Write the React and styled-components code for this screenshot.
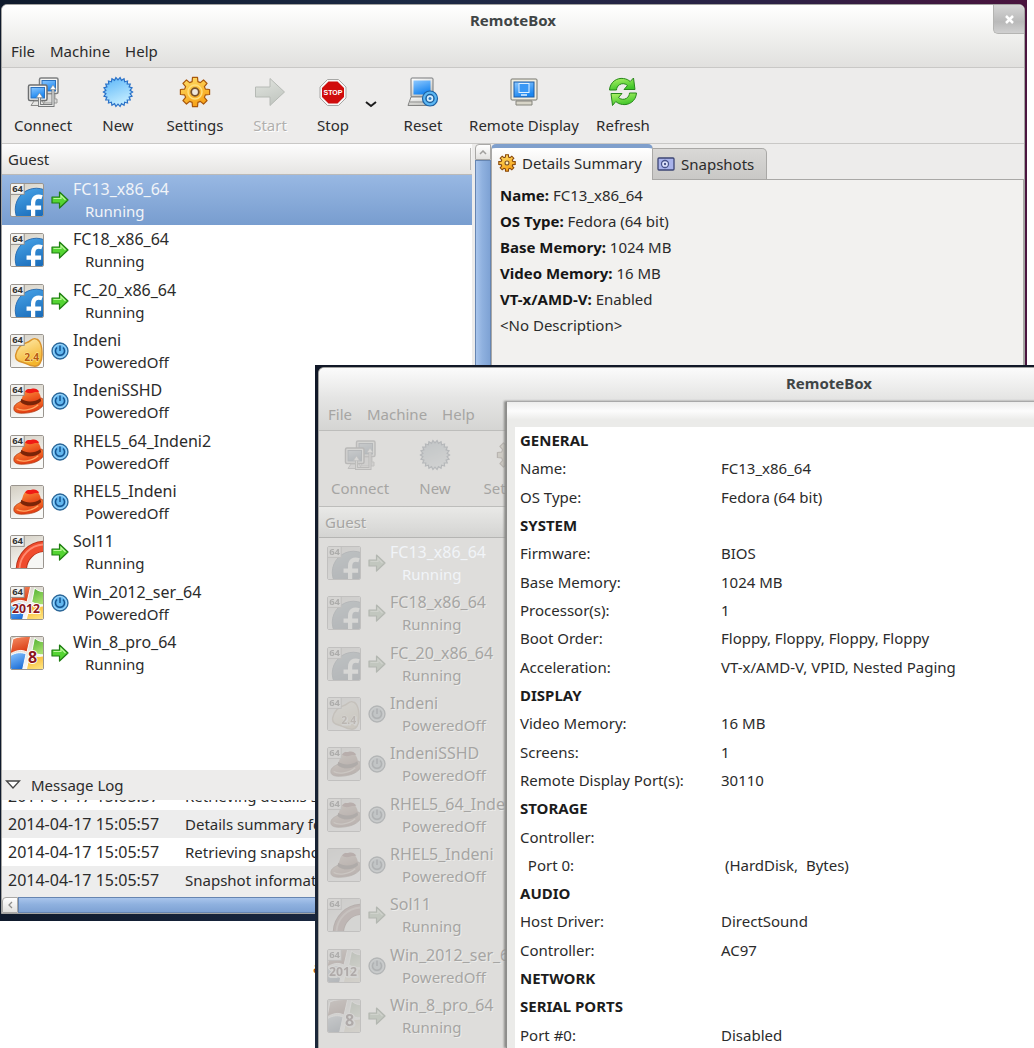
import React from "react";
import styled, { createGlobalStyle, css } from "styled-components";

const GlobalStyle = createGlobalStyle`
  * {
    box-sizing: border-box;
  }
  body {
    margin: 0;
    background: #fff;
    color: #2b2b2b;
    font-family: "Noto Sans", "Open Sans", sans-serif;
    font-size: 15px;
    line-height: 22px;
  }
  button {
    font: inherit;
    color: inherit;
    border: 0;
    padding: 0;
    background: none;
  }
`;

const Desktop = styled.div`
  position: relative;
  height: 100vh;
  min-height: 921px;
  overflow: hidden;
`;

const Screen = styled.div`
  position: absolute;
  width: calc(100% - 7px);
  ${(p) =>
    p.$front
      ? css`
          top: 365px;
          left: 315px;
          bottom: 0;
          padding: 2px 2px 0 3px;
          background: linear-gradient(#111827, #1b2739);
        `
      : css`
          top: 0;
          left: 0;
          padding: 4px 2px 7px 1px;
          background: linear-gradient(90deg, #0f1a2c, #1c2a45 40%, #2c2246 75%, #4a143e);
        `}
`;

const Stray = styled.span`
  position: absolute;
  top: 956px;
  left: 313px;
  color: #a04a00;
`;

const Window = styled.section`
  position: relative;
  border: 1px solid #a3a3a1;
  border-radius: 6px 6px 0 0;
  overflow: hidden;
  background: ${(p) => (p.$dim ? "#dedddb" : "#edeceb")};
  color: ${(p) => (p.$dim ? "#a6a5a3" : "#2b2b2b")};
  text-shadow: ${(p) => (p.$dim ? "1px 1px 0 #ececea" : "none")};
  ${(p) => p.$dim && "height: 100%; border-bottom: 0;"}
`;

const Top = styled.header`
  background: ${(p) =>
    p.$dim
      ? "linear-gradient(#fbfbfb, #e4e4e3 50%, #d5d5d3)"
      : "linear-gradient(#fff, #eeeeec 55%, #e1e0de)"};
  border-bottom: 1px solid ${(p) => (p.$dim ? "#bdbdbb" : "#c9c8c6")};
`;

const Title = styled.h1`
  margin: 0;
  font-size: 15px;
  line-height: 30px;
  font-weight: bold;
  text-align: center;
  color: #3f4546;
  text-shadow: none;
`;

const MenuBar = styled.nav`
  display: flex;
  gap: 15px;
  padding: 2px 9px;
  line-height: 28px;
`;

const CloseButton = styled.button`
  position: absolute;
  top: 0;
  right: 0;
  width: 31px;
  height: 29px;
  display: flex;
  align-items: center;
  justify-content: center;
  border: 1px solid #b4b4b2;
  border-width: 0 0 1px 1px;
  border-radius: 0 0 0 5px;
  background: linear-gradient(#d6d6d6, #b9b9b9 60%, #d0d0d0);
`;

const Toolbar = styled.div`
  display: flex;
  height: 76px;
  padding-top: 8px;
  border-bottom: 1px solid ${(p) => (p.$dim ? "#bdbdbb" : "#c9c8c6")};
`;

const ToolButton = styled.button`
  flex: none;
  width: ${(p) => p.$width}px;
  display: flex;
  flex-direction: column;
  align-items: center;
  gap: 6px;
  line-height: 22px;
  white-space: nowrap;
  &:disabled {
    color: #b1b0ae;
    text-shadow: 1px 1px 0 #fff;
  }
`;

const Chevron = styled.button`
  width: 14px;
  padding-top: 18px;
  display: flex;
  justify-content: center;
`;

const Glyph = styled.svg`
  display: block;
  flex: none;
  overflow: ${(p) => (p.$clip ? "hidden" : "visible")};
  ${(p) => p.$clip && "border: 1px solid #9a958f; border-radius: 2px;"}
  ${(p) => p.$dim && "filter: grayscale(0.8) contrast(0.6); opacity: 0.35;"}
`;

const Body = styled.div`
  display: flex;
  height: ${(p) => (p.$dim ? "auto" : "626px")};
`;

const GuestPane = styled.div`
  width: 470px;
  background: ${(p) => (p.$dim ? "transparent" : "#fff")};
`;

const ColumnHeader = styled.div`
  display: flex;
  align-items: center;
  height: 31px;
  padding: 0 1px 0 6px;
  background: ${(p) =>
    p.$dim
      ? "linear-gradient(#e9e9e7, #d4d4d2)"
      : "linear-gradient(#fdfdfd, #e6e5e3)"};
  border-bottom: 1px solid ${(p) => (p.$dim ? "#b5b5b3" : "#bbbab8")};
`;

const HeaderCell = styled.span`
  flex: 1;
  border-right: 1px solid #bbbab8;
`;

const GuestList = styled.ul`
  margin: 0;
  padding: 0;
  list-style: none;
  display: grid;
  grid-auto-rows: 1fr;
  height: 503px;
`;

const Guest = styled.li`
  display: flex;
  align-items: center;
  padding-left: 8px;
  background: ${(p) =>
    p.$selected && !p.$dim ? "linear-gradient(#98b8e3, #789dcf)" : "none"};
  color: ${(p) => (p.$selected ? "#f1f4f8" : "inherit")};
  ${(p) => p.$selected && "text-shadow: none;"}
`;

const State = styled.span`
  padding: 0 4px 0 7px;
`;

const GuestText = styled.div`
  display: flex;
  flex-direction: column;
  white-space: nowrap;
`;

const GuestName = styled.span`
  font-size: 16px;
`;

const Status = styled.span`
  padding-left: 12px;
`;

const Scrollbar = styled.div`
  display: flex;
  flex-direction: ${(p) => (p.$vertical ? "column" : "row")};
  ${(p) => (p.$vertical ? "width: 16px; margin-left: 3px;" : "height: 16px;")}
`;

const ScrollButton = styled.button`
  flex: none;
  width: 16px;
  height: 16px;
  display: flex;
  align-items: center;
  justify-content: center;
  border: 1px solid #a9a8a6;
  border-radius: 4px 0 0 0;
  background: linear-gradient(#fff, #e2e1df);
`;

const Thumb = styled.div`
  flex: 1;
  border: 1px solid #6685b1;
  background: linear-gradient(
    ${(p) => (p.$vertical ? "90deg" : "180deg")},
    #a9c5ec,
    #8fb1df 45%,
    #7ea2d4
  );
`;

const Notebook = styled.div`
  flex: 1;
  min-width: 0;
  display: flex;
  flex-direction: column;
`;

const Tabs = styled.div`
  display: flex;
  align-items: flex-end;
  height: 36px;
`;

const Tab = styled.button`
  display: flex;
  align-items: center;
  gap: 6px;
  white-space: nowrap;
  border: 1px solid #a9a8a6;
  ${(p) =>
    p.$active
      ? css`
          width: 162px;
          height: 36px;
          padding: 0 6px 2px;
          border-top: 4px solid #7f9fcc;
          border-bottom: 0;
          border-radius: 5px 5px 0 0;
          background: linear-gradient(#fff, #f2f1ef 60%);
        `
      : css`
          width: 114px;
          height: 32px;
          padding: 0 4px;
          border-left: 0;
          border-radius: 0 5px 0 0;
          background: linear-gradient(#d9d8d6, #c9c8c6);
        `}
`;

const TabRule = styled.span`
  flex: 1;
  height: 1px;
  background: #a9a8a6;
`;

const TabPage = styled.div`
  flex: 1;
  padding: 2px 8px;
  border: 1px solid #a9a8a6;
  border-top: 0;
  background: #f2f1ef;
  line-height: 26px;
`;

const Fact = styled.div`
  b {
    color: #161616;
  }
`;

const Expander = styled.button`
  display: flex;
  align-items: center;
  gap: 10px;
  width: 100%;
  height: 30px;
  padding: 0 3px;
`;

const LogView = styled.div`
  display: flex;
  flex-direction: column;
  justify-content: flex-end;
  height: 97px;
  overflow: hidden;
  background: #ededed;
  padding-bottom: 3px;
`;

const LogTable = styled.table`
  border-collapse: collapse;
  td {
    height: 28px;
    padding: 0 0 0 6px;
    white-space: nowrap;
  }
  td:first-child {
    width: 177px;
    font-size: 16px;
  }
  tr:nth-child(odd) {
    background: #fff;
  }
  tr:nth-child(even) {
    background: #ededed;
  }
`;

const Sheet = styled.div`
  position: absolute;
  top: 33px;
  left: 187px;
  right: 0;
  bottom: 0;
  padding: 25px 0 0 8px;
  border-top: 1px solid #a8a8a8;
  border-left: 1px solid #8d8d8b;
  box-shadow: -2px 0 2px #8b8b89;
  background: linear-gradient(#ededec, #fcfcfc 9px, #ebebe9 18px);
  color: #2b2b2b;
  text-shadow: none;
`;

const SheetTable = styled.table`
  width: 100%;
  height: 623px;
  border-collapse: collapse;
  background: #fff;
  th,
  td {
    padding: 0 0 2px 5px;
    text-align: left;
    font-weight: normal;
    white-space: pre;
  }
  th {
    width: 201px;
  }
  th[colspan] {
    font-weight: bold;
    color: #1c1c1c;
  }
`;

const guests = [
  ["FC13_x86_64", "Running", "fedora", true],
  ["FC18_x86_64", "Running", "fedora", true],
  ["FC_20_x86_64", "Running", "fedora", true],
  ["Indeni", "PoweredOff", "linux", true],
  ["IndeniSSHD", "PoweredOff", "redhat", true],
  ["RHEL5_64_Indeni2", "PoweredOff", "redhat", true],
  ["RHEL5_Indeni", "PoweredOff", "redhat", false],
  ["Sol11", "Running", "solaris", true],
  ["Win_2012_ser_64", "PoweredOff", "win2012", true],
  ["Win_8_pro_64", "Running", "win8", false],
];

const facts = [
  ["Name:", "FC13_x86_64"],
  ["OS Type:", "Fedora (64 bit)"],
  ["Base Memory:", "1024 MB"],
  ["Video Memory:", "16 MB"],
  ["VT-x/AMD-V:", "Enabled"],
];

const logRows = [
  "Retrieving details s",
  "Details summary for",
  "Retrieving snapshots",
  "Snapshot information",
];

const details = [
  ["GENERAL"],
  ["Name:", "FC13_x86_64"],
  ["OS Type:", "Fedora (64 bit)"],
  ["SYSTEM"],
  ["Firmware:", "BIOS"],
  ["Base Memory:", "1024 MB"],
  ["Processor(s):", "1"],
  ["Boot Order:", "Floppy, Floppy, Floppy, Floppy"],
  ["Acceleration:", "VT-x/AMD-V, VPID, Nested Paging"],
  ["DISPLAY"],
  ["Video Memory:", "16 MB"],
  ["Screens:", "1"],
  ["Remote Display Port(s):", "30110"],
  ["STORAGE"],
  ["Controller:", ""],
  ["  Port 0:", " (HardDisk,  Bytes)"],
  ["AUDIO"],
  ["Host Driver:", "DirectSound"],
  ["Controller:", "AC97"],
  ["NETWORK"],
  ["SERIAL PORTS"],
  ["Port #0:", "Disabled"],
];

function ring(steps, center) {
  return steps
    .map(([angle, r]) => {
      const x = center + r * Math.cos(angle);
      const y = center + r * Math.sin(angle);
      return `${x.toFixed(2)},${y.toFixed(2)}`;
    })
    .join(" ");
}

const burst = ring(
  Array.from({ length: 44 }, (_, i) => [(i * Math.PI) / 22, i % 2 ? 12.2 : 14.6]),
  16
);

const cog = ring(
  Array.from({ length: 8 }, (_, i) => {
    const a = (i * Math.PI) / 4;
    return [
      [a - 0.27, 10.8],
      [a - 0.17, 14.8],
      [a + 0.17, 14.8],
      [a + 0.27, 10.8],
    ];
  }).flat(),
  16
);

function Defs() {
  const gradients = {
    screen: ["#8cc8ff", "#1a86f0"],
    burst: ["#58b4f8", "#c2ecff"],
    gold: ["#ffe06a", "#f7a41a"],
    green: ["#b4f56c", "#3fc528"],
    grey: ["#e2e5e0", "#c3c8c2"],
    metal: ["#ffffff", "#c4c4c0"],
    plate: ["#d3cec2", "#fafaf8"],
    fedora: ["#4ba6ea", "#0b5bab"],
    hat: ["#ff9440", "#e23a10"],
    flame: ["#ffeeb4", "#f4b52c"],
    winRed: ["#f7936a", "#d93a12"],
    winGreen: ["#4cae2c", "#a5de6c"],
    winBlue: ["#8cc6ff", "#1e6fd8"],
    winGold: ["#f5a516", "#ffe27a"],
  };
  return (
    <svg width="0" height="0" style={{ position: "absolute" }} aria-hidden="true">
      <defs>
        {Object.entries(gradients).map(([id, [from, to]]) => (
          <linearGradient key={id} id={id} x1="0" y1="0" x2="0.4" y2="1">
            <stop offset="0" stopColor={from} />
            <stop offset="1" stopColor={to} />
          </linearGradient>
        ))}
      </defs>
    </svg>
  );
}

const toolArt = {
  connect: (
    <>
      <rect x="12.500" y="2" width="18.500" height="15.500" rx="1.500" fill="#f6f6f4" stroke="#7d7f80" strokeWidth="1.500" />
      <rect x="15" y="4.500" width="13.500" height="10.500" fill="url(#screen)" stroke="#2b71bd" />
      <path d="M18 18h10v5h2v4H17z" fill="#dcdcda" stroke="#9b9b99" />
      <rect x="1.500" y="9" width="18.500" height="15.500" rx="1.500" fill="#f6f6f4" stroke="#6d6f70" strokeWidth="1.500" />
      <rect x="4" y="11.500" width="13.500" height="10.500" fill="url(#screen)" stroke="#2b71bd" />
      <path d="M7 25h8l3 4.500H4z" fill="#e6e6e4" stroke="#8b8b89" />
      <path
        d="M12.500 20v9.500H26V13"
        fill="none"
        stroke="#77797a"
        strokeWidth="3"
      />
      <path
        d="M12.500 20v9.500H26V13"
        fill="none"
        stroke="#e9e9e7"
        strokeWidth="1.200"
      />
      <path d="M9.500 21.500l3-4.500 3 4.500zM23 13.500l3-4.500 3 4.500z" fill="#fff" stroke="#8b8d8e" strokeWidth="0.600" />
    </>
  ),
  new: <polygon points={burst} fill="url(#burst)" stroke="#2b72c8" strokeWidth="1.200" />,
  settings: (
    <>
      <polygon
        points={cog}
        fill="url(#gold)"
        stroke="#a9580c"
        strokeWidth="1.200"
        strokeLinejoin="round"
      />
      <circle cx="16" cy="16" r="7" fill="none" stroke="#ffdf7c" strokeWidth="1.500" />
      <circle cx="16" cy="16" r="3.800" fill="#eee7dc" stroke="#77502a" strokeWidth="1.800" />
    </>
  ),
  start: (
    <path
      d="M1.500 11H16V2.500L30.500 16 16 29.500V21H1.500z"
      fill="url(#grey)"
      stroke="#b6bab5"
      strokeLinejoin="round"
    />
  ),
  stop: (
    <>
      <path
        d="M10.500 3.500h11l7.500 7.500v11l-7.500 7.500h-11L3 22V11z"
        fill="#f7f7f7"
        stroke="#a7a7a5"
      />
      <path d="M11.500 5.500h9l6.500 6.500v9l-6.500 6.500h-9L5 21v-9z" fill="#d00c0c" />
      <text
        x="16"
        y="19"
        textAnchor="middle"
        fontFamily="Liberation Sans, sans-serif"
        fontSize="7"
        fontWeight="bold"
        fill="#fff"
      >
        STOP
      </text>
    </>
  ),
  reset: (
    <>
      <rect x="4" y="2" width="22" height="19" rx="1" fill="url(#metal)" stroke="#77797a" />
      <rect x="6.500" y="4.500" width="17" height="14" fill="url(#screen)" />
      <path d="M4 21h20l3 8.500H1z" fill="url(#metal)" stroke="#838382" />
      <path d="M3 26h20" stroke="#8d8d8b" />
      <circle cx="23" cy="22.500" r="7.500" fill="#5cb7f2" stroke="#1e62a5" strokeWidth="1.200" />
      <circle cx="23" cy="22.500" r="4" fill="#d8f0ff" stroke="#1c5f9e" strokeWidth="1.500" />
      <circle cx="23" cy="22.500" r="1.500" fill="#2d7cc4" />
    </>
  ),
  display: (
    <>
      <path d="M8 25h16v4H8z" fill="#d8d5c8" stroke="#85847c" />
      <rect x="3" y="3" width="26" height="21" rx="1" fill="#f1eee1" stroke="#77776f" />
      <rect x="6" y="6" width="20" height="15" fill="url(#screen)" stroke="#1c5da8" />
      <rect x="11" y="7.500" width="10" height="9" fill="#3a98f5" stroke="#dff0ff" />
      <path d="M13 19h6" stroke="#dff0ff" strokeWidth="1.500" />
    </>
  ),
  refresh: (
    <g fill="url(#green)" stroke="#28871b" strokeLinejoin="round">
      <path d="M2.500 14C3 6 10 1.500 16.500 2.500c3 .4 5 1.500 6.700 3L26.500 2l1.500 11.500H17l3.500-4c-2-2-5.500-2.500-8-.8C10.500 10 9.600 12 9.500 14z" />
      <path d="M29.500 17c-.5 8-7.500 12.500-14 11.500-3-.4-5-1.500-6.700-3L5.500 29.500 4 17.500h11l-3.500 4c2 2 5.500 2.500 8 .8 2-1.300 2.900-3.300 3-5.300z" />
    </g>
  ),
};

function WinFlag({ label }) {
  const big = label === "8";
  return (
    <>
      <path d="M2 2C8-1 15 0 21-1l-4 17C11 13 6 14-1 18z" fill="url(#winRed)" stroke="#fff" />
      <path d="M25 1c3 3 7 4 10 4v14c-5 0-9-1-13-3z" fill="url(#winGreen)" stroke="#fff" />
      <path d="M-1 20c6-4 12-4 17-2l-4 18H-1z" fill="url(#winBlue)" stroke="#fff" />
      <path d="M20 18c5 3 9 3 15 2v16H16z" fill="url(#winGold)" stroke="#fff" />
      <text
        x={big ? 23 : 16}
        y="28"
        textAnchor="middle"
        fontFamily="Noto Sans, sans-serif"
        fontSize={big ? 17 : 13}
        fontWeight="bold"
        fill="#8c1620"
        stroke="#fff"
        strokeWidth="2"
        paintOrder="stroke"
      >
        {label}
      </text>
    </>
  );
}

const osArt = {
  fedora: (
    <>
      <circle cx="27" cy="27" r="22.500" fill="url(#fedora)" stroke="#2a6cb0" />
      <path
        d="M33 14c-6-2-9.500 1-9.500 6V36M16.500 25H32"
        fill="none"
        stroke="#fff"
        strokeWidth="4.500"
      />
    </>
  ),
  linux: (
    <>
      <path
        d="M17 8c4-1 5-5 9-4 5 1 7 9 7 17 0 7-3 13-9 12-5 0-7-3-12-4-4-1-8-3-7-8C6 17 9 10 17 8z"
        fill="url(#flame)"
        stroke="#d9932c"
        strokeWidth="1.500"
      />
      <text
        x="22"
        y="28"
        textAnchor="middle"
        fontFamily="Noto Sans, sans-serif"
        fontSize="11"
        fontWeight="bold"
        fill="#b85a12"
        stroke="#fff0a0"
        strokeWidth="1"
        paintOrder="stroke"
      >
        2.4
      </text>
    </>
  ),
  redhat: (
    <>
      <path
        d="M3 25c0-4 4-6 8-8 7-4 14-3 22-3 3 3 2 8-1 10-4 4-12 6-20 6-5 0-9-1-9-5z"
        fill="url(#hat)"
        stroke="#b03a10"
        strokeWidth="0.800"
      />
      <path
        d="M11 16c2-5 2-10 7-11 4-1 8-1 10 1 3 3 4 7 4 11-6 6-16 6-21 2z"
        fill="url(#hat)"
      />
      <path d="M11 14.500c5 4 14 4 20-.5l1 3c-6 6-16 6-22 1z" fill="#7a2408" />
      <path d="M15 7c2-4 5-2 7-3 3-1 6 0 8 3-2 1-4 0-6 1-3 1-7 1-9-1z" fill="#f01a14" />
      <path d="M6 25c5 3 16 2 23-4" fill="none" stroke="#ffa866" strokeWidth="1.300" />
    </>
  ),
  solaris: (
    <>
      <circle cx="36" cy="36" r="25" fill="#f6f6f4" stroke="#b8331a" strokeWidth="12" />
      <circle cx="36" cy="36" r="25" fill="none" stroke="#f04c2e" strokeWidth="10" />
      <circle cx="36" cy="36" r="27" fill="none" stroke="#ff8a70" strokeWidth="2" />
    </>
  ),
  win2012: <WinFlag label="2012" />,
  win8: <WinFlag label="8" />,
};

function OsIcon({ os, is64, dim }) {
  return (
    <Glyph $clip $dim={dim} width="34" height="34" viewBox="0 0 34 34" aria-hidden="true">
      <rect width="34" height="34" fill="url(#plate)" />
      {osArt[os]}
      {is64 && (
        <>
          <rect x="-1" y="-1" width="15" height="12" fill="#f3f3f1" stroke="#8c8884" />
          <text
            x="7"
            y="9"
            textAnchor="middle"
            fontFamily="Noto Sans, sans-serif"
            fontSize="10"
            fontWeight="bold"
            fill="#333"
          >
            64
          </text>
        </>
      )}
    </Glyph>
  );
}

function StateIcon({ running, dim }) {
  return (
    <Glyph $dim={dim} width="18" height="18" viewBox="0 0 18 18" aria-hidden="true">
      {running ? (
        <>
          <path
            d="M1 6h7.500V1L17 9l-8.500 8v-5H1z"
            fill="#54d433"
            stroke="#1f7d12"
            strokeWidth="1.200"
            strokeLinejoin="round"
          />
          <path d="M2.500 7.500H10V4.500L14.500 9" fill="none" stroke="#b9f79a" strokeWidth="1.200" />
        </>
      ) : (
        <>
          <circle cx="9" cy="9" r="8" fill="#62b7ef" stroke="#2c6697" strokeWidth="1.300" />
          <path
            d="M6 5.500a4.500 4.500 0 1 0 6 0M9 3.500V9"
            fill="none"
            stroke="#14538f"
            strokeWidth="1.500"
          />
          <circle cx="9" cy="9" r="6.500" fill="none" stroke="#b6e1fb" strokeWidth="0.800" />
        </>
      )}
    </Glyph>
  );
}

function Tool({ art, label, width, dim, disabled }) {
  return (
    <ToolButton $width={width} disabled={disabled}>
      <Glyph $dim={dim} width="32" height="32" viewBox="0 0 32 32" aria-hidden="true">
        {toolArt[art]}
      </Glyph>
      {label}
    </ToolButton>
  );
}

function TitleAndMenu({ dim }) {
  return (
    <Top $dim={dim}>
      <Title>RemoteBox</Title>
      <MenuBar>
        <button>File</button>
        <button>Machine</button>
        <button>Help</button>
      </MenuBar>
    </Top>
  );
}

function Guests({ dim }) {
  return (
    <GuestPane $dim={dim}>
      <ColumnHeader $dim={dim}>
        <HeaderCell>Guest</HeaderCell>
      </ColumnHeader>
      <GuestList>
        {guests.map(([name, status, os, is64], index) => (
          <Guest key={name} $selected={index === 0} $dim={dim}>
            <OsIcon os={os} is64={is64} dim={dim} />
            <State>
              <StateIcon running={status === "Running"} dim={dim} />
            </State>
            <GuestText>
              <GuestName>{name}</GuestName>
              <Status>{status}</Status>
            </GuestText>
          </Guest>
        ))}
      </GuestList>
    </GuestPane>
  );
}

function MainWindow() {
  return (
    <Window>
      <TitleAndMenu />
      <CloseButton aria-label="Close">
        <svg width="9" height="9" viewBox="0 0 9 9">
          <path d="M1 1l7 7M8 1L1 8" stroke="#fff" strokeWidth="2.500" />
        </svg>
      </CloseButton>
      <Toolbar>
        <Tool art="connect" label="Connect" width={82} />
        <Tool art="new" label="New" width={68} />
        <Tool art="settings" label="Settings" width={86} />
        <Tool art="start" label="Start" width={64} disabled />
        <Tool art="stop" label="Stop" width={62} />
        <Chevron aria-label="Stop options">
          <svg width="12" height="18" viewBox="0 0 12 18">
            <path d="M1 8l5 4 5-4" fill="none" stroke="#1d1d1d" strokeWidth="2" />
          </svg>
        </Chevron>
        <Tool art="reset" label="Reset" width={90} />
        <Tool art="display" label="Remote Display" width={112} />
        <Tool art="refresh" label="Refresh" width={86} />
      </Toolbar>
      <Body>
        <Guests />
        <Scrollbar $vertical>
          <ScrollButton aria-label="Scroll up">
            <svg width="8" height="5" viewBox="0 0 8 5">
              <path d="M1 4l3-3 3 3" fill="none" stroke="#a09f9d" strokeWidth="1.500" />
            </svg>
          </ScrollButton>
          <Thumb $vertical />
        </Scrollbar>
        <Notebook>
          <Tabs>
            <Tab $active>
              <Glyph width="18" height="18" viewBox="0 0 32 32" aria-hidden="true">
                <polygon points={cog} fill="url(#gold)" stroke="#8a4a0c" strokeWidth="2" />
                <circle cx="16" cy="16" r="3.500" fill="#fff0c0" stroke="#77502a" strokeWidth="2" />
              </Glyph>
              Details Summary
            </Tab>
            <Tab>
              <Glyph width="18" height="14" viewBox="0 0 18 14" aria-hidden="true">
                <rect x="1" y="1" width="16" height="12" rx="1" fill="#a9b3ea" stroke="#3c4574" strokeWidth="1.300" />
                <circle cx="8" cy="7" r="3.500" fill="#e3e8ff" stroke="#4a558c" strokeWidth="1.300" />
                <circle cx="8" cy="7" r="1.200" fill="#4a558c" />
              </Glyph>
              Snapshots
            </Tab>
            <TabRule />
          </Tabs>
          <TabPage>
            {facts.map(([label, value]) => (
              <Fact key={label}>
                <b>{label}</b> {value}
              </Fact>
            ))}
            <Fact>{"<No Description>"}</Fact>
          </TabPage>
        </Notebook>
      </Body>
      <Expander>
        <svg width="16" height="10" viewBox="0 0 16 10" aria-hidden="true">
          <path d="M1.500 1h13L8 8z" fill="#fff" stroke="#444" strokeWidth="1.300" />
        </svg>
        Message Log
      </Expander>
      <LogView>
        <LogTable>
          <tbody>
            {logRows.map((message) => (
              <tr key={message}>
                <td>2014-04-17 15:05:57</td>
                <td>{message}</td>
              </tr>
            ))}
          </tbody>
        </LogTable>
      </LogView>
      <Scrollbar>
        <ScrollButton aria-label="Scroll left">
          <svg width="5" height="8" viewBox="0 0 5 8">
            <path d="M4 1L1 4l3 3" fill="none" stroke="#8f8e8c" strokeWidth="1.300" />
          </svg>
        </ScrollButton>
        <Thumb />
      </Scrollbar>
    </Window>
  );
}

function DetailsWindow() {
  return (
    <Window $dim>
      <TitleAndMenu dim />
      <Toolbar $dim>
        <Tool art="connect" label="Connect" width={82} dim />
        <Tool art="new" label="New" width={68} dim />
        <Tool art="settings" label="Settings" width={86} dim />
      </Toolbar>
      <Body $dim>
        <Guests dim />
      </Body>
      <Sheet role="dialog" aria-label="Guest details">
        <SheetTable>
          <tbody>
            {details.map(([label, value], index) => (
              <tr key={index}>
                {value === undefined ? (
                  <th colSpan={2}>{label}</th>
                ) : (
                  <>
                    <th scope="row">{label}</th>
                    <td>{value}</td>
                  </>
                )}
              </tr>
            ))}
          </tbody>
        </SheetTable>
      </Sheet>
    </Window>
  );
}

export default function App() {
  return (
    <>
      <GlobalStyle />
      <Defs />
      <Desktop>
        <Screen>
          <MainWindow />
        </Screen>
        <Stray>a</Stray>
        <Screen $front>
          <DetailsWindow />
        </Screen>
      </Desktop>
    </>
  );
}
